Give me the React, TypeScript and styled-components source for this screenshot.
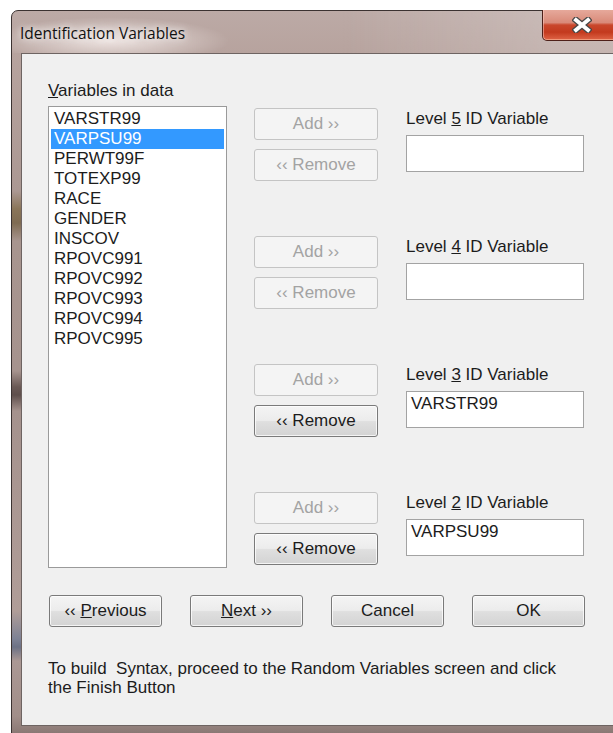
import React from 'react';
import styled, { createGlobalStyle } from 'styled-components';

const GlobalStyle = createGlobalStyle`
  html, body {
    margin: 0;
    padding: 0;
    background: #ffffff;
    overflow: hidden;
  }
  body {
    font-family: "Liberation Sans", Arial, sans-serif;
    font-size: 17px;
    color: #1c1c1c;
  }
`;

const Desktop = styled.div`
  width: 613px;
  height: 733px;
  padding: 10px 0 0 11px;
  box-sizing: border-box;
  overflow: hidden;
`;

// glass frame with a few darker reflections down the left edge
const Window = styled.div`
  width: 660px;
  box-sizing: border-box;
  border: 1px solid #3b3231;
  border-radius: 7px 7px 0 0;
  padding-bottom: 12px;
  background: linear-gradient(
    180deg,
    #bcaaa6 0px,
    #b7a39e 42px,
    #ab9893 180px,
    #8a7559 198px,
    #7f6b52 212px,
    #a8958f 230px,
    #a6938e 360px,
    #6a5955 376px,
    #5f4f4c 384px,
    #a5928d 400px,
    #b09d98 600px,
    #7d8194 628px,
    #6c7185 636px,
    #ab9894 650px,
    #a18e89 705px,
    #8a7874 722px
  );
`;

const TitleBar = styled.div`
  height: 42px;
  display: flex;
  align-items: flex-start;
  border-radius: 6px 6px 0 0;
  background:
    radial-gradient(ellipse 120px 24px at 98px 30px, rgba(255, 248, 246, 0.75), rgba(255, 255, 255, 0) 100%),
    linear-gradient(90deg, rgba(255, 255, 255, 0) 0%, rgba(255, 255, 255, 0) 50%, rgba(255, 255, 255, 0.2) 82%);
`;

const Title = styled.div`
  flex: 0 0 530px;
  box-sizing: border-box;
  padding: 12px 0 0 8px;
  font-family: "Open Sans", "Noto Sans", sans-serif;
  font-size: 15.5px;
  line-height: 20px;
  color: #111;
  text-shadow: 0 0 6px rgba(255, 255, 255, 0.9), 0 0 12px rgba(255, 255, 255, 0.7);
`;

const CloseButton = styled.div`
  flex: 0 0 80px;
  height: 31px;
  margin-top: -1px;
  box-sizing: border-box;
  display: flex;
  align-items: center;
  padding-left: 29px;
  border: 1px solid #4e2019;
  border-top: none;
  border-radius: 0 0 0 5px;
  background: linear-gradient(
    180deg,
    #e6a99b 0%,
    #d98a79 42%,
    #c9472c 50%,
    #c33a1e 74%,
    #df6446 100%
  );
  box-shadow: inset 1px 0 0 rgba(255, 210, 200, 0.5), inset 0 -1px 0 rgba(255, 190, 160, 0.6);
`;

const Client = styled.div`
  margin: 0 9px 0 9px;
  height: 673px;
  box-sizing: border-box;
  border: 1px solid #6e6462;
  background: #f0f0f0;
  padding: 27px 0 0 26px;
`;

const Main = styled.div`
  display: flex;
  align-items: flex-start;
`;

const ListColumn = styled.div`
  width: 179px;
  display: flex;
  flex-direction: column;
`;

const Caption = styled.div`
  height: 20px;
  line-height: 20px;
  white-space: nowrap;
`;

const ListBox = styled.ul`
  margin: 5px 0 0;
  padding: 2px;
  list-style: none;
  height: 462px;
  box-sizing: border-box;
  border: 1px solid #9a9a9a;
  background: #ffffff;
`;

const ListItem = styled.li<{ $selected?: boolean }>`
  height: 20px;
  line-height: 20px;
  padding-left: 3px;
  color: ${p => (p.$selected ? '#ffffff' : '#1c1c1c')};
  background: ${p => (p.$selected ? '#3399ff' : 'transparent')};
`;

const LevelStack = styled.div`
  margin-left: 27px;
  padding-top: 27px;
  display: flex;
  flex-direction: column;
  gap: 55px;
`;

const LevelGroup = styled.div`
  display: grid;
  grid-template-columns: 124px 178px;
  column-gap: 28px;
  align-items: start;
`;

const ButtonStack = styled.div`
  display: flex;
  flex-direction: column;
  gap: 9px;
`;

const PushButton = styled.button<{ $width?: number }>`
  width: ${p => (p.$width ? `${p.$width}px` : '100%')};
  height: 32px;
  box-sizing: border-box;
  padding: 0;
  border: 1px solid #7a7a7a;
  border-radius: 3px;
  font-family: "Liberation Sans", Arial, sans-serif;
  font-size: 17px;
  color: #1c1c1c;
  background: linear-gradient(180deg, #f4f4f4 0%, #ececec 48%, #dfdfdf 52%, #d3d3d3 100%);
  box-shadow: inset 0 0 0 1px rgba(255, 255, 255, 0.75);

  &:disabled {
    border-color: #c4c4c4;
    color: #a3a3a3;
    background: #f4f4f4;
    box-shadow: none;
  }
`;

const FieldColumn = styled.div`
  padding-top: 1px;
  display: flex;
  flex-direction: column;
  gap: 6px;
`;

const TextField = styled.div`
  height: 37px;
  box-sizing: border-box;
  border: 1px solid #a3a3a3;
  background: #ffffff;
  padding: 2px 4px;
  line-height: 20px;
`;

const ButtonRow = styled.div`
  margin-top: 27px;
  padding-left: 1px;
  display: flex;
  gap: 28px;
`;

const Hint = styled.p`
  margin: 32px 0 0;
  line-height: 19px;
  white-space: pre;
`;

const variables = [
  'VARSTR99',
  'VARPSU99',
  'PERWT99F',
  'TOTEXP99',
  'RACE',
  'GENDER',
  'INSCOV',
  'RPOVC991',
  'RPOVC992',
  'RPOVC993',
  'RPOVC994',
  'RPOVC995',
];

interface Level {
  level: number;
  value: string;
}

const levels: Level[] = [
  { level: 5, value: '' },
  { level: 4, value: '' },
  { level: 3, value: 'VARSTR99' },
  { level: 2, value: 'VARPSU99' },
];

const CloseGlyph = () => (
  <svg width="20" height="16" viewBox="0 0 20 16">
    <path d="M4 3 L16 13 M16 3 L4 13" stroke="#474747" strokeWidth="6.5" strokeLinecap="square" />
    <path d="M4 3 L16 13 M16 3 L4 13" stroke="#ffffff" strokeWidth="4" strokeLinecap="square" />
  </svg>
);

const App: React.FC = () => {
  const selected = 'VARPSU99';

  return (
    <>
      <GlobalStyle />
      <Desktop>
        <Window>
          <TitleBar>
            <Title>Identification Variables</Title>
            <CloseButton>
              <CloseGlyph />
            </CloseButton>
          </TitleBar>
          <Client>
            <Main>
              <ListColumn>
                <Caption>
                  <u>V</u>ariables in data
                </Caption>
                <ListBox>
                  {variables.map(name => (
                    <ListItem key={name} $selected={name === selected}>
                      {name}
                    </ListItem>
                  ))}
                </ListBox>
              </ListColumn>

              <LevelStack>
                {levels.map(l => (
                  <LevelGroup key={l.level}>
                    <ButtonStack>
                      <PushButton disabled>Add ››</PushButton>
                      <PushButton disabled={!l.value}>‹‹ Remove</PushButton>
                    </ButtonStack>
                    <FieldColumn>
                      <Caption>
                        Level <u>{l.level}</u> ID Variable
                      </Caption>
                      <TextField>{l.value}</TextField>
                    </FieldColumn>
                  </LevelGroup>
                ))}
              </LevelStack>
            </Main>

            <ButtonRow>
              <PushButton $width={113}>
                ‹‹ <u>P</u>revious
              </PushButton>
              <PushButton $width={113}>
                <u>N</u>ext ››
              </PushButton>
              <PushButton $width={113}>Cancel</PushButton>
              <PushButton $width={113}>OK</PushButton>
            </ButtonRow>

            <Hint>
              {'To build  Syntax, proceed to the Random Variables screen and click\nthe Finish Button'}
            </Hint>
          </Client>
        </Window>
      </Desktop>
    </>
  );
};

export default App;
